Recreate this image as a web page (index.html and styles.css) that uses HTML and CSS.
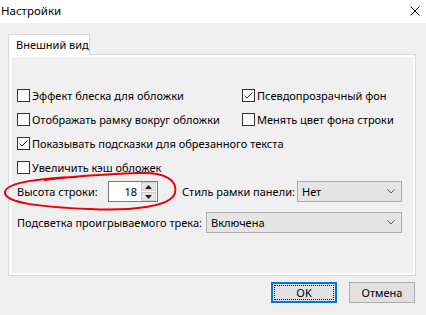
FILE: index.html
```html
<!DOCTYPE html>
<html lang="ru">
<head>
<meta charset="utf-8">
<title>Настройки</title>
<link rel="stylesheet" href="styles.css">
</head>
<body>
<div class="window">
  <div class="titlebar">
    <span class="title">Настройки</span>
    <svg class="close" width="10" height="10" viewBox="0 0 10 10"><path d="M0.5 0.5 L9.5 9.5 M9.5 0.5 L0.5 9.5" stroke="#111" stroke-width="1" fill="none"/></svg>
  </div>
  <div class="content">
    <div class="tabs">
      <div class="tab">Внешний вид</div>
    </div>
    <div class="panel">
      <div class="page">
        <div class="row two">
          <label class="check"><span class="box"></span>Эффект блеска для обложки</label>
          <label class="check"><span class="box checked"><svg width="11" height="11" viewBox="0 0 11 11"><path d="M1.5 5.5 L4 8 L9.5 2.5" stroke="#333" stroke-width="1" fill="none"/></svg></span>Псевдопрозрачный фон</label>
        </div>
        <div class="row two">
          <label class="check"><span class="box"></span>Отображать рамку вокруг обложки</label>
          <label class="check"><span class="box"></span>Менять цвет фона строки</label>
        </div>
        <div class="row">
          <label class="check"><span class="box checked"><svg width="11" height="11" viewBox="0 0 11 11"><path d="M1.5 5.5 L4 8 L9.5 2.5" stroke="#333" stroke-width="1" fill="none"/></svg></span>Показывать подсказки для обрезанного текста</label>
        </div>
        <div class="row">
          <label class="check"><span class="box"></span>Увеличить кэш обложек</label>
        </div>
        <div class="row ctrl-row">
          <span class="lbl lbl-height">Высота строки:</span>
          <div class="spin">
            <span class="spin-val">18</span>
            <div class="spin-btns">
              <span class="sbtn"><svg width="7" height="4" viewBox="0 0 7 4"><path d="M3.5 0 L7 4 L0 4 Z" fill="#222"/></svg></span>
              <span class="sbtn"><svg width="7" height="4" viewBox="0 0 7 4"><path d="M0 0 L7 0 L3.5 4 Z" fill="#222"/></svg></span>
            </div>
          </div>
          <span class="lbl lbl-style">Стиль рамки панели:</span>
          <div class="combo combo-small">
            <span>Нет</span>
            <svg width="8" height="5" viewBox="0 0 8 5"><path d="M0.5 0.5 L4 4 L7.5 0.5" stroke="#555" fill="none"/></svg>
          </div>
        </div>
        <div class="row ctrl-row2">
          <span class="lbl lbl-hl">Подсветка проигрываемого трека:</span>
          <div class="combo combo-wide">
            <span>Включена</span>
            <svg width="8" height="5" viewBox="0 0 8 5"><path d="M0.5 0.5 L4 4 L7.5 0.5" stroke="#555" fill="none"/></svg>
          </div>
        </div>
      </div>
    </div>
    <div class="buttons">
      <button class="btn btn-ok"><span class="focus">OK</span></button>
      <button class="btn">Отмена</button>
    </div>
  </div>
  <svg class="scribble" width="426" height="315" viewBox="0 0 426 315"><path d="M76 177 C45 178 6 182 5 192 C4 203 40 207 90 209 C130 211 171 207 175 193 C178 181 166 172 140 173 C112 174 82 175 45 180" stroke="#e8000b" stroke-width="2" fill="none" stroke-linecap="round"/></svg>
</div>
</body>
</html>
```

FILE: styles.css
```css
* { box-sizing: border-box; }
html, body { margin: 0; padding: 0; }
body {
  width: 426px;
  height: 315px;
  overflow: hidden;
  background: #f0f0f0;
  font-family: "Noto Sans", "Open Sans", sans-serif;
  font-size: 11px;
  color: #000;
}
.window { position: relative; width: 426px; height: 315px; }
.titlebar {
  height: 23px;
  background: #fff;
  display: flex;
  align-items: center;
  justify-content: space-between;
  padding: 0 6px 2px 1px;
}
.title { font-size: 11.5px; line-height: 14px; }
.close { margin-top: 1px; }
.content { padding: 11px 10px 0 8px; }
.tabs { display: flex; height: 20px; }
.tab {
  width: 82px;
  height: 21px;
  background: #fff;
  border: 1px solid #d9d9d9;
  border-bottom: none;
  padding-left: 7px;
  line-height: 19px;
  white-space: nowrap;
  position: relative;
  z-index: 1;
}
.panel {
  width: 408px;
  height: 222px;
  border: 1px solid #d9d9d9;
  background: #fff;
  padding: 2px 2px 2px 3px;
}
.page {
  height: 100%;
  background: #f0f0f0;
  padding: 26px 0 0 5px;
  display: flex;
  flex-direction: column;
}
.row { display: flex; align-items: center; height: 24px; flex: none; }
.row.two { display: grid; grid-template-columns: 225px 1fr; }
.check { display: flex; align-items: center; white-space: nowrap; }
.box {
  width: 13px;
  height: 13px;
  border: 1px solid #333;
  background: #fff;
  margin-right: 2px;
  display: flex;
  align-items: center;
  justify-content: center;
  flex: none;
}
.ctrl-row { height: 31px; margin-top: -3px; }
.ctrl-row2 { height: 31px; }
.lbl { white-space: nowrap; flex: none; }
.lbl-height { width: 91px; }
.spin {
  width: 50px;
  height: 21px;
  border: 1px solid #7a7a7a;
  background: #fff;
  display: flex;
  align-items: center;
  flex: none;
}
.spin-val { flex: 1; text-align: right; padding-right: 4px; }
.spin-btns {
  width: 15px;
  height: 19px;
  display: flex;
  flex-direction: column;
  gap: 1px;
  margin-right: 1px;
}
.sbtn {
  flex: 1;
  background: #e5e5e5;
  border: 1px solid #cfcfcf;
  display: flex;
  align-items: center;
  justify-content: center;
}
.lbl-style { margin-left: 24px; width: 115px; }
.combo {
  height: 21px;
  border: 1px solid #adadad;
  background: #e5e5e5;
  display: flex;
  align-items: center;
  justify-content: space-between;
  padding: 0 6px 0 4px;
  flex: none;
}
.combo-small { width: 105px; }
.lbl-hl { width: 189px; }
.combo-wide { width: 196px; }
.buttons {
  display: flex;
  justify-content: flex-end;
  gap: 12px;
  padding: 6px 1px 0 0;
}
.btn {
  width: 66px;
  height: 21px;
  font: inherit;
  color: #000;
  background: #e1e1e1;
  border: 1px solid #adadad;
  padding: 0;
  display: flex;
  align-items: center;
  justify-content: center;
}
.btn-ok { border: 2px solid #0078d7; padding: 1px; }
.focus {
  width: 100%;
  height: 100%;
  border: 1px dotted #000;
  display: flex;
  align-items: center;
  justify-content: center;
}
.scribble { position: absolute; left: 0; top: 0; pointer-events: none; }
```
